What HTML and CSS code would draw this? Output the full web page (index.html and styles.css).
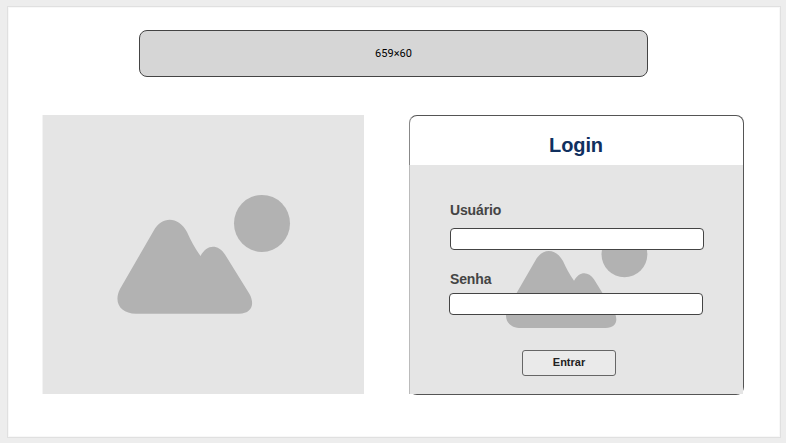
FILE: index.html
```html
<!DOCTYPE html>
<html lang="pt-BR">
<head>
<meta charset="utf-8">
<title>Login</title>
<link rel="stylesheet" href="styles.css">
</head>
<body>
<svg class="defs" aria-hidden="true">
  <symbol id="landscape" viewBox="43 115 321 279" preserveAspectRatio="none">
    <path d="M153.500 231C162 216 178 216 187 232C191 241 195 248 200.500 256C207 244 218 244 225 254.500L249.500 294C255 304 252 313.700 239 313.700H136C121 313.700 113 303 120 289Z"/>
    <ellipse cx="262" cy="223.400" rx="28" ry="28.500"/>
  </symbol>
</svg>
<div class="frame">
  <header class="banner">659×60</header>
  <main class="content">
    <div class="picture"><svg><use href="#landscape"/></svg></div>
    <section class="card">
      <h1>Login</h1>
      <form class="panel">
        <svg class="backdrop"><use href="#landscape"/></svg>
        <label for="user">Usuário</label>
        <input id="user" class="user" type="text">
        <label for="password">Senha</label>
        <input id="password" class="password" type="password">
        <button type="button">Entrar</button>
      </form>
    </section>
  </main>
</div>
</body>
</html>
```
FILE: styles.css
```css
* { box-sizing: border-box; }
body {
  margin: 0;
  padding: 6px 5px 5px 7px;
  height: 443px;
  overflow: hidden;
  background: #ededed;
  font-family: "Liberation Sans", Arial, sans-serif;
}
.defs { display: none; }
.frame {
  width: 774px;
  height: 432px;
  padding: 23px 35px 0;
  border: 1px solid #e0e0e0;
  background: #fff;
  box-shadow: inset 0 0 0 1px #f8f8f8;
}
.banner {
  display: flex;
  align-items: center;
  justify-content: center;
  width: 509px;
  height: 47px;
  margin-left: 96px;
  border: 1px solid #444;
  border-radius: 8px;
  background: #d6d6d6;
  color: #000;
  font: 11px Roboto, sans-serif;
}
.content {
  display: flex;
  gap: 45px;
  margin-top: 38px;
}
.picture {
  width: 321px;
  height: 279px;
  background: #e5e5e5;
  box-shadow: -1px 0 #f3f3f3;
}
svg { display: block; fill: #b2b2b2; }
.picture svg { width: 321px; height: 279px; }
.card {
  width: 335px;
  height: 280px;
  border: 1px solid #555;
  border-left-color: #888;
  border-radius: 8px;
}
h1 {
  height: 49px;
  margin: 0 1px 0 0;
  color: #10305f;
  font-size: 20px;
  line-height: 58px;
  text-align: center;
  letter-spacing: -0.1px;
}
.panel {
  position: relative;
  display: flex;
  flex-direction: column;
  width: 333px;
  height: 229px;
  padding: 37px 0 0 40px;
  background: #e5e5e5;
  box-shadow: -1px 0 #bbb;
}
.backdrop {
  position: absolute;
  top: 0;
  left: 35px;
  width: 263px;
  height: 229px;
}
label {
  position: relative;
  height: 26px;
  color: #444;
  font-size: 14px;
  font-weight: bold;
  line-height: 16px;
  letter-spacing: -0.15px;
}
input {
  position: relative;
  width: 254px;
  height: 22px;
  padding: 0 6px;
  border: 1px solid #444;
  border-radius: 4px;
  background: #fff;
}
.user { margin: 0 0 21px 0; }
.password { margin: -4px 0 0 -1px; }
button {
  width: 94px;
  height: 26px;
  margin: 35px 0 0 72px;
  padding: 0 0 2px;
  border: 1px solid #666;
  border-radius: 3px;
  background: #eaeaea;
  color: #222;
  font: bold 11px "Liberation Sans", Arial, sans-serif;
}
```
